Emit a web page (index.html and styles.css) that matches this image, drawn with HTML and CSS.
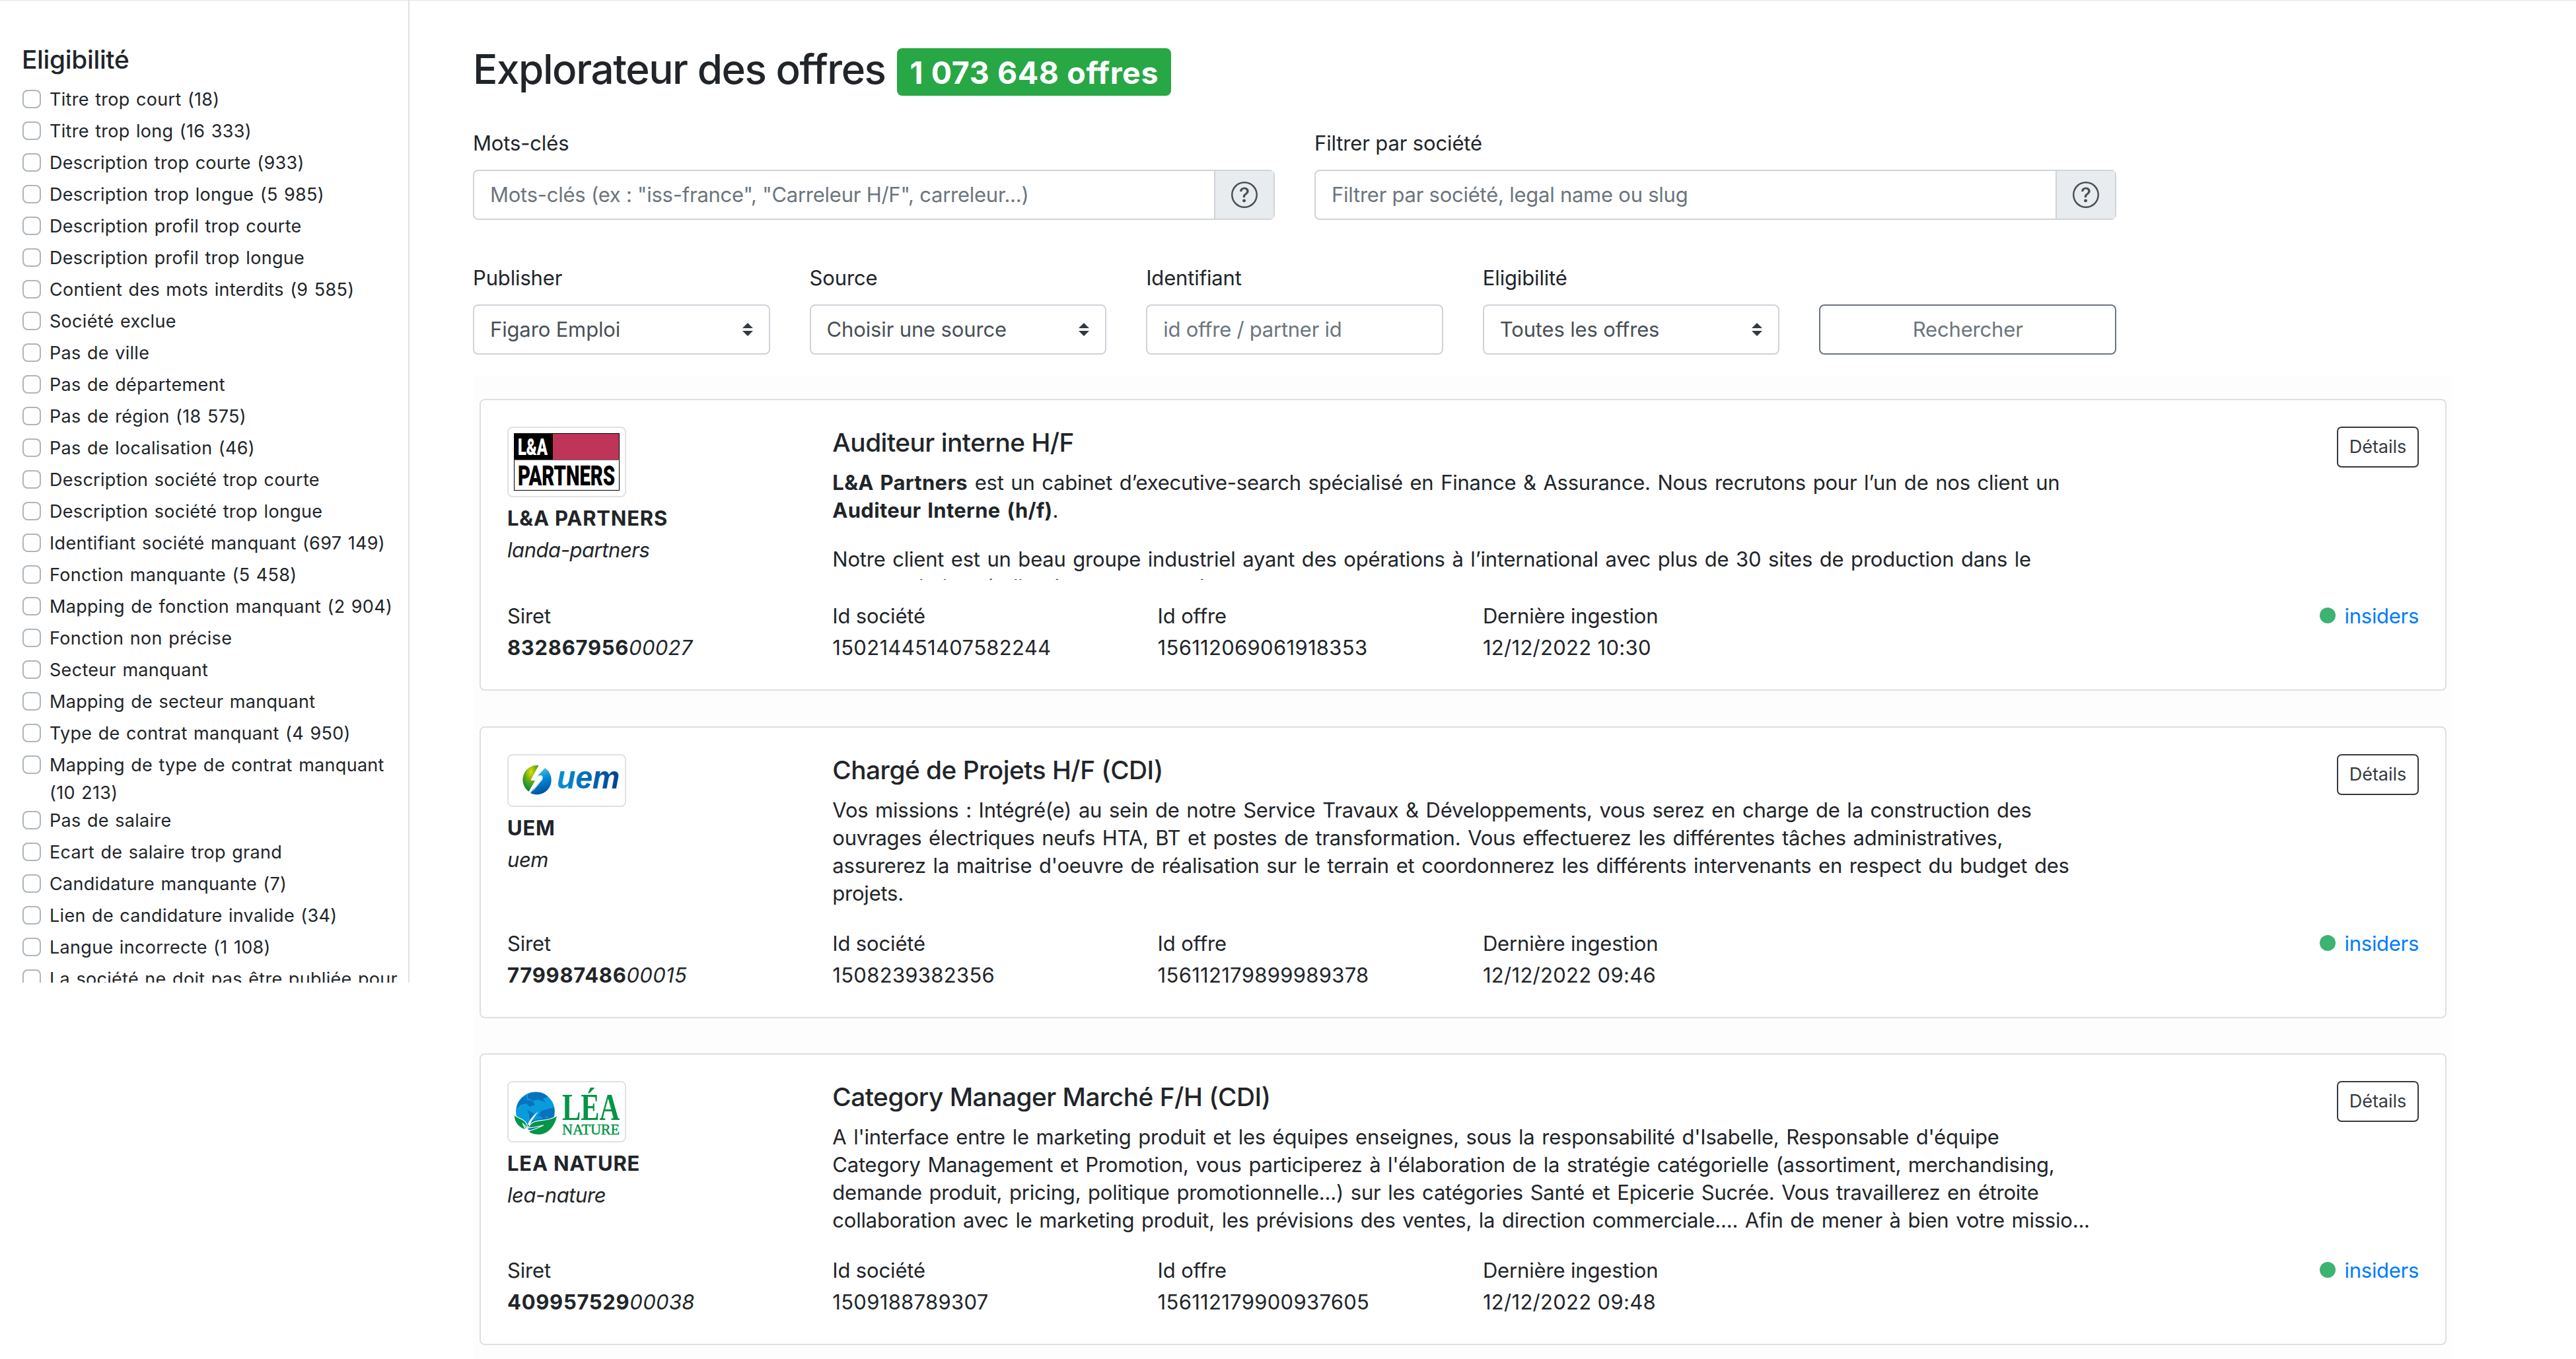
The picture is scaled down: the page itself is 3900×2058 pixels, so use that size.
FILE: index.html
```html
<!DOCTYPE html>
<html lang="fr">
<head>
<meta charset="utf-8">
<title>Explorateur des offres</title>
<link rel="stylesheet" href="styles.css">
</head>
<body>
<svg class="defs" aria-hidden="true">
  <symbol id="help" viewBox="0 0 16 16"><path d="M8 15A7 7 0 1 1 8 1a7 7 0 0 1 0 14zm0 1A8 8 0 1 0 8 0a8 8 0 0 0 0 16z"/><path d="M5.255 5.786a.237.237 0 0 0 .241.247h.825c.138 0 .248-.113.266-.25.09-.656.54-1.134 1.342-1.134.686 0 1.314.343 1.314 1.168 0 .635-.374.927-.965 1.371-.673.489-1.206 1.06-1.168 1.987l.003.217a.25.25 0 0 0 .25.246h.811a.25.25 0 0 0 .25-.25v-.105c0-.718.273-.927 1.01-1.486.609-.463 1.244-.977 1.244-2.056 0-1.511-1.276-2.241-2.673-2.241-1.267 0-2.655.59-2.75 2.286zm1.557 5.763c0 .533.425.927 1.01.927.609 0 1.028-.394 1.028-.927 0-.552-.42-.94-1.029-.94-.584 0-1.009.388-1.009.94z"/></symbol>
  <symbol id="arrows" viewBox="0 0 16 20"><path d="M0 8 8 0l8 8zM0 12l8 8 8-8z"/></symbol>
</svg>
<div class="page">
  <aside class="sidebar">
    <h2 class="sidebar-title">Eligibilité</h2>
    <ul class="checks">
      <li><i></i><span>Titre trop court (18)</span></li>
      <li><i></i><span>Titre trop long (16 333)</span></li>
      <li><i></i><span>Description trop courte (933)</span></li>
      <li><i></i><span>Description trop longue (5 985)</span></li>
      <li><i></i><span>Description profil trop courte</span></li>
      <li><i></i><span>Description profil trop longue</span></li>
      <li><i></i><span>Contient des mots interdits (9 585)</span></li>
      <li><i></i><span>Société exclue</span></li>
      <li><i></i><span>Pas de ville</span></li>
      <li><i></i><span>Pas de département</span></li>
      <li><i></i><span>Pas de région (18 575)</span></li>
      <li><i></i><span>Pas de localisation (46)</span></li>
      <li><i></i><span>Description société trop courte</span></li>
      <li><i></i><span>Description société trop longue</span></li>
      <li><i></i><span>Identifiant société manquant (697 149)</span></li>
      <li><i></i><span>Fonction manquante (5 458)</span></li>
      <li><i></i><span>Mapping de fonction manquant (2 904)</span></li>
      <li><i></i><span>Fonction non précise</span></li>
      <li><i></i><span>Secteur manquant</span></li>
      <li><i></i><span>Mapping de secteur manquant</span></li>
      <li><i></i><span>Type de contrat manquant (4 950)</span></li>
      <li><i></i><span>Mapping de type de contrat manquant<br>(10 213)</span></li>
      <li><i></i><span>Pas de salaire</span></li>
      <li><i></i><span>Ecart de salaire trop grand</span></li>
      <li><i></i><span>Candidature manquante (7)</span></li>
      <li><i></i><span>Lien de candidature invalide (34)</span></li>
      <li><i></i><span>Langue incorrecte (1 108)</span></li>
      <li><i></i><span>La société ne doit pas être publiée pour</span></li>
    </ul>
  </aside>

  <main class="main">
    <h1 class="title"><span>Explorateur des offres</span><span class="badge">1 073 648 offres</span></h1>

    <div class="row row-2">
      <div class="field">
        <label>Mots-clés</label>
        <div class="control group"><span class="placeholder">Mots-clés (ex : "iss-france", "Carreleur H/F", carreleur...)</span><span class="addon"><svg><use href="#help"/></svg></span></div>
      </div>
      <div class="field">
        <label>Filtrer par société</label>
        <div class="control group"><span class="placeholder">Filtrer par société, legal name ou slug</span><span class="addon"><svg><use href="#help"/></svg></span></div>
      </div>
    </div>

    <div class="row row-5">
      <div class="field"><label>Publisher</label><div class="control select"><span>Figaro Emploi</span><svg><use href="#arrows"/></svg></div></div>
      <div class="field"><label>Source</label><div class="control select"><span>Choisir une source</span><svg><use href="#arrows"/></svg></div></div>
      <div class="field"><label>Identifiant</label><div class="control"><span class="placeholder">id offre / partner id</span></div></div>
      <div class="field"><label>Eligibilité</label><div class="control select"><span>Toutes les offres</span><svg><use href="#arrows"/></svg></div></div>
      <div class="field end"><button class="search">Rechercher</button></div>
    </div>

    <section class="offers">
      <article class="card">
        <div class="company">
          <div class="logo">
            <svg width="160" height="87" viewBox="0 0 160 87">
              <rect x=".5" y=".5" width="159" height="86" fill="#fff" stroke="#000"/>
              <rect width="59" height="40" fill="#000"/>
              <rect x="59" y="1" width="100" height="39" fill="#bf355a"/>
              <path d="M0 40.5h160" stroke="#666"/>
              <text x="6" y="33" class="lna" font-size="35" fill="#fff" textLength="45" lengthAdjust="spacingAndGlyphs">L&amp;A</text>
              <text x="6" y="79" class="lna" font-size="43" textLength="147" lengthAdjust="spacingAndGlyphs">PARTNERS</text>
            </svg>
          </div>
          <strong class="name">L&amp;A PARTNERS</strong>
          <em class="slug">landa-partners</em>
        </div>
        <div class="summary">
          <h3>Auditeur interne H/F</h3>
          <div class="desc"><p><b>L&amp;A Partners</b> est un cabinet d’executive-search spécialisé en Finance &amp; Assurance. Nous recrutons pour l’un de nos client un<br><b>Auditeur Interne (h/f)</b>.</p><p>Notre client est un beau groupe industriel ayant des opérations à l’international avec plus de 30 sites de production dans le<br>secteur de la métallurgie en construction</p></div>
        </div>
        <button class="details">Détails</button>
        <dl><dt>Siret</dt><dd><b>832867956</b><em>00027</em></dd></dl>
        <dl><dt>Id société</dt><dd>150214451407582244</dd></dl>
        <dl><dt>Id offre</dt><dd>156112069061918353</dd></dl>
        <dl><dt>Dernière ingestion</dt><dd>12/12/2022 10:30</dd></dl>
        <div class="source"><i></i><a>insiders</a></div>
      </article>

      <article class="card">
        <div class="company">
          <div class="logo">
            <svg width="160" height="60" viewBox="0 0 160 60">
              <defs>
                <radialGradient id="ug" cx=".5" cy=".25" r=".75"><stop offset="0" stop-color="#dfdc00"/><stop offset=".55" stop-color="#55a51c"/><stop offset="1" stop-color="#00863d"/></radialGradient>
                <linearGradient id="ub" x1=".4" y1="0" x2=".7" y2="1"><stop offset="0" stop-color="#5cc3ea"/><stop offset=".45" stop-color="#0089d0"/><stop offset="1" stop-color="#00489b"/></linearGradient>
                <linearGradient id="ut"><stop offset="0" stop-color="#0094d8"/><stop offset="1" stop-color="#00408f"/></linearGradient>
              </defs>
              <path d="M38 7A22 22 0 0 0 23 47L33 30H26Z" fill="url(#ug)"/>
              <path d="M47 11A22 22 0 0 1 25 49L43 25 35 24Z" fill="url(#ub)"/>
              <path d="M38 7 26 29H33L23 47" fill="none" stroke="#fff" stroke-width="1"/>
              <path d="M34 24C40 20 46 22 43 29L28 47 37 29H32Z" fill="#fff" opacity=".85"/>
              <text x="65" y="41.500" class="uem" font-size="49" fill="url(#ut)" textLength="95" lengthAdjust="spacingAndGlyphs">uem</text>
            </svg>
          </div>
          <strong class="name">UEM</strong>
          <em class="slug">uem</em>
        </div>
        <div class="summary">
          <h3>Chargé de Projets H/F (CDI)</h3>
          <div class="desc"><p>Vos missions : Intégré(e) au sein de notre Service Travaux &amp; Développements, vous serez en charge de la construction des<br>ouvrages électriques neufs HTA, BT et postes de transformation. Vous effectuerez les différentes tâches administratives,<br>assurerez la maitrise d'oeuvre de réalisation sur le terrain et coordonnerez les différents intervenants en respect du budget des<br>projets.</p></div>
        </div>
        <button class="details">Détails</button>
        <dl><dt>Siret</dt><dd><b>779987486</b><em>00015</em></dd></dl>
        <dl><dt>Id société</dt><dd>1508239382356</dd></dl>
        <dl><dt>Id offre</dt><dd>156112179899989378</dd></dl>
        <dl><dt>Dernière ingestion</dt><dd>12/12/2022 09:46</dd></dl>
        <div class="source"><i></i><a>insiders</a></div>
      </article>

      <article class="card">
        <div class="company">
          <div class="logo">
            <svg width="160" height="73" viewBox="0 0 160 73">
              <circle cx="32.500" cy="36" r="29.500" fill="#0a9bdc"/>
              <path d="M21 10C32 4 46 7 52 14L44 17 48 22 36 18 30 20 21 16ZM4 32C5 23 11 15 19 12L20 19 28 20 32 26 24 29 19 24 10 26ZM20 34 30 39 28 45 24 48 23 40ZM61 30 61 44 54 52 50 42 46 49 41 43 36 44 42 35ZM4 43 11 47 9 52Z" fill="#0872bd"/>
              <path d="M22 54 37 36 31 44 28 50 45 46 60 47 50 62 22 64Z" fill="#0872bd"/>
              <path d="M21 56C24 48 30 42 37 36 31 45 26 51 24 57Z" fill="#fff"/>
              <path d="M0 41C8 49 20 46 21 63L19 60 13 54 18 64C8 62 0 53 0 41Z" fill="#049547" stroke="#fff" stroke-width="1.200"/>
              <path d="M22 61C28 44 48 55 66 42 62 62 47 78 25 69L22 66 34 62 45 57 31 60Z" fill="#049547" stroke="#fff" stroke-width="1.200"/>
              <text x="73" y="49" class="lea" font-weight="700" font-size="56" textLength="87" lengthAdjust="spacingAndGlyphs">LÉA</text>
              <text x="73" y="70.500" class="lea" font-size="24" textLength="87" lengthAdjust="spacingAndGlyphs" stroke="#049547" stroke-width=".5">NATURE</text>
            </svg>
          </div>
          <strong class="name">LEA NATURE</strong>
          <em class="slug">lea-nature</em>
        </div>
        <div class="summary">
          <h3>Category Manager Marché F/H (CDI)</h3>
          <div class="desc"><p>A l'interface entre le marketing produit et les équipes enseignes, sous la responsabilité d'Isabelle, Responsable d'équipe<br>Category Management et Promotion, vous participerez à l'élaboration de la stratégie catégorielle (assortiment, merchandising,<br>demande produit, pricing, politique promotionnelle...) sur les catégories Santé et Epicerie Sucrée. Vous travaillerez en étroite<br>collaboration avec le marketing produit, les prévisions des ventes, la direction commerciale.... Afin de mener à bien votre missio...</p></div>
        </div>
        <button class="details">Détails</button>
        <dl><dt>Siret</dt><dd><b>409957529</b><em>00038</em></dd></dl>
        <dl><dt>Id société</dt><dd>1509188789307</dd></dl>
        <dl><dt>Id offre</dt><dd>156112179900937605</dd></dl>
        <dl><dt>Dernière ingestion</dt><dd>12/12/2022 09:48</dd></dl>
        <div class="source"><i></i><a>insiders</a></div>
      </article>
    </section>
  </main>
</div>
</body>
</html>
```

FILE: styles.css
```css
* { box-sizing: border-box; }
body {
  margin: 0;
  background: #fff;
  color: #212529;
  font: 400 31px/48px Inter, "Liberation Sans", sans-serif;
  letter-spacing: -.15px;
}
h1, h2, h3, p, ul, dl, dd { margin: 0; padding: 0; }
button { font: inherit; letter-spacing: inherit; background: transparent; }
.defs { display: none; }
.page {
  display: flex;
  align-items: flex-start;
  height: 2058px;
  overflow: hidden;
  border-top: 1px solid #dee2e6;
}

.sidebar {
  width: 620px;
  height: 1487px;
  flex: none;
  overflow: hidden;
  padding: 65px 0 0 33px;
  border-right: 2px solid #dee2e6;
}
.sidebar-title { font-size: 38.8px; font-weight: 500; letter-spacing: -.3px; margin-bottom: 16px; }
.checks { list-style: none; font-size: 27px; line-height: 42px; letter-spacing: .3px; word-spacing: 1.5px; white-space: nowrap; }
.checks li { display: flex; gap: 13px; min-height: 48px; }
.checks i {
  width: 28px;
  height: 28px;
  margin: 6px 0 0 1px;
  flex: none;
  border: 2px solid #adb5bd;
  border-radius: 8px;
}

.main { width: 2997px; margin-left: 96px; }
.title {
  display: flex;
  align-items: baseline;
  gap: 17px;
  height: 192px;
  padding-top: 65px;
  font-size: 62px;
  font-weight: 500;
  line-height: 77px;
  letter-spacing: -1.440px;
}
.badge {
  height: 72px;
  padding: 13px 19px 0 20px;
  border-radius: 8px;
  background: #28a745;
  color: #fff;
  font-size: 46.5px;
  font-weight: 700;
  line-height: 48px;
  letter-spacing: .6px;
}
.row { display: grid; gap: 60px; width: 2488px; }
.row-2 { grid-template-columns: repeat(2, 1fr); margin-bottom: 64px; }
.row-5 { grid-template-columns: repeat(5, 1fr); margin-bottom: 32px; }
.field { display: flex; flex-direction: column; gap: 16px; }
.end { justify-content: flex-end; }
.control {
  display: flex;
  align-items: center;
  justify-content: space-between;
  height: 76px;
  padding: 0 24px;
  border: 2px solid #ced4da;
  border-radius: 8px;
  color: #495057;
}
.placeholder { color: #6c757d; letter-spacing: -.25px; }
.group { padding-right: 0; }
.addon {
  display: flex;
  align-items: center;
  justify-content: center;
  align-self: stretch;
  width: 90px;
  border-left: 2px solid #ced4da;
  background: #e9ecef;
}
.addon svg { width: 40px; height: 40px; fill: #495057; }
.select svg { width: 16px; height: 20px; fill: #343a40; }
.search { height: 76px; border: 2px solid #6c757d; border-radius: 8px; color: #6c757d; }

.offers {
  display: flex;
  flex-direction: column;
  gap: 53.500px;
  padding: 35px 9px 35px 10px;
  background: #fdfdfd;
}
.card {
  display: grid;
  grid-template-columns: repeat(4, 492.300px) 1fr;
  grid-template-rows: 263px 96px;
  height: 442px;
  padding: 40px 40px 0;
  border: 2px solid #dfdfdf;
  border-radius: 8px;
  background: #fff;
}
.company { display: flex; flex-direction: column; align-items: flex-start; }
.logo {
  padding: 8px;
  margin-bottom: 8px;
  border: 2px solid #dee2e6;
  border-radius: 8px;
}
.logo svg { display: block; }
.lna { font-family: Roboto, sans-serif; font-weight: 900; }
.uem { font-family: "Liberation Sans", sans-serif; font-weight: 700; font-style: italic; }
.lea { font-family: "Liberation Serif", serif; fill: #049547; }
.name { font-weight: 700; letter-spacing: .78px; }
.slug { letter-spacing: -.45px; }
.summary { grid-column: 2 / 5; white-space: nowrap; }
.summary h3 { font-size: 38.800px; font-weight: 500; letter-spacing: -.5px; margin-bottom: 16px; }
.desc { width: 1960px; height: 168px; overflow: hidden; line-height: 42px; letter-spacing: -.22px; word-spacing: 2.200px; }
.desc p { margin-bottom: 32px; }
.desc b { letter-spacing: .3px; }
.details {
  justify-self: end;
  width: 124px;
  height: 62px;
  padding: 0;
  border: 2px solid #343a40;
  border-radius: 7px;
  color: #343a40;
  font-size: 27px;
  letter-spacing: 0;
}
dd { letter-spacing: .3px; }
dd b { letter-spacing: .69px; }
.source { display: flex; justify-content: flex-end; gap: 14px; letter-spacing: -.3px; }
.source i { width: 24px; height: 24px; margin-top: 11px; border-radius: 50%; background: #3cb371; }
.source a { color: #007bff; }
```
